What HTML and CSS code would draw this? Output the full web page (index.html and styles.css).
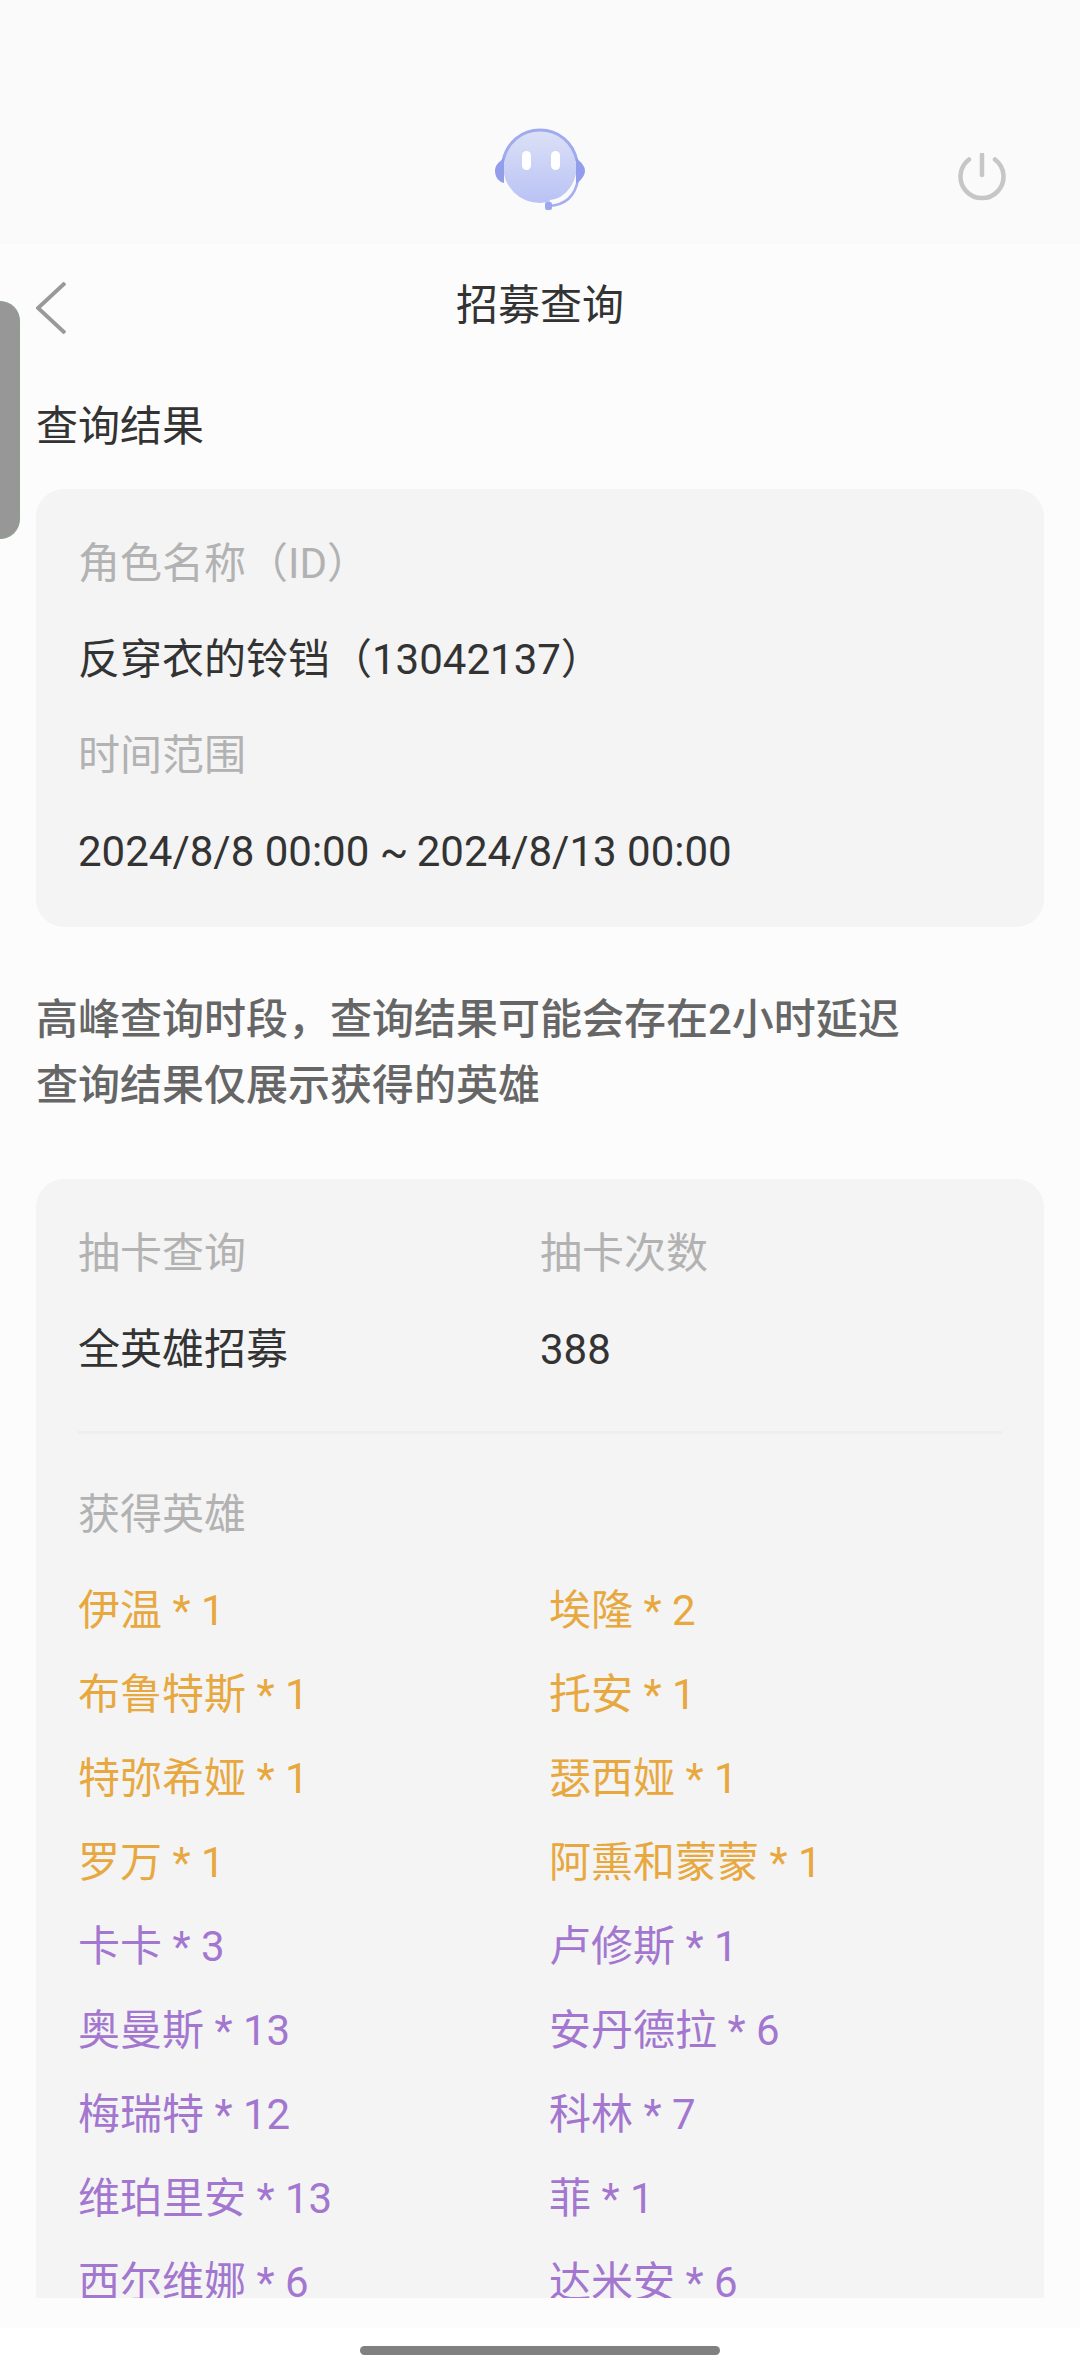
FILE: index.html
```html
<!DOCTYPE html>
<html lang="zh-CN">
<head>
  <meta charset="UTF-8" />
  <meta name="viewport" content="width=device-width, initial-scale=1.0" />
  <title>招募查询</title>
  <link rel="stylesheet" href="styles.css">
</head>
<body>
  <header class="top-bar">
    <svg class="robot" viewBox="0 0 90 82">
      <defs>
        <linearGradient id="face" x1="0" y1="0" x2="0" y2="1">
          <stop offset="0" stop-color="#dde1f6" />
          <stop offset="1" stop-color="#b9c2f5" />
        </linearGradient>
      </defs>
      <circle cx="45" cy="38" r="37" fill="url(#face)" />
      <path d="M8 33C12 14 27 2 45 2s33 12 37 31" fill="none" stroke="#a0abee" stroke-width="3" />
      <path d="M82 51C77 65 68 73 55 74" fill="none" stroke="#fafafa" stroke-width="4" />
      <path d="M83 52C80 68 70 77 54 78" fill="none" stroke="#a5aff0" stroke-width="2.6" />
      <path d="M9 30v25C4 54 0 49 0 43s4-9 9-13z" fill="#929eeb" />
      <path d="M81 30v26c4-3 9-8 9-13s-4-9-9-13z" fill="#929eeb" />
      <rect x="27" y="23" width="9" height="19" rx="4.5" fill="#fff" />
      <rect x="56" y="23" width="9" height="19" rx="4.5" fill="#fff" />
      <rect x="50" y="74" width="7" height="8" rx="2" fill="#9da8ee" />
    </svg>
    <svg class="power" viewBox="0 0 48 48">
      <path d="M11 6.500A21.500 21.500 0 1 0 37 6.500M24 1.500V22" />
    </svg>
  </header>

  <main>
    <div class="title-bar">
      <svg class="back" viewBox="0 0 30 52">
        <path d="M29 1L2 26l27 25" />
      </svg>
      <h1>招募查询</h1>
    </div>

    <h2>查询结果</h2>

    <section class="card role-card">
      <p class="label">角色名称（ID）</p>
      <p>反穿衣的铃铛（13042137）</p>
      <p class="label">时间范围</p>
      <p>2024/8/8 00:00 <span class="tilde">~</span> 2024/8/13 00:00</p>
    </section>

    <p class="notice">高峰查询时段，查询结果可能会存在2小时延迟<br>查询结果仅展示获得的英雄</p>

    <section class="card result-card">
      <div class="summary">
        <div>
          <p class="label">抽卡查询</p>
          <p>全英雄招募</p>
        </div>
        <div>
          <p class="label">抽卡次数</p>
          <p>388</p>
        </div>
      </div>
      <p class="label heroes-label">获得英雄</p>
      <ul class="heroes">
        <li class="gold">伊温 * 1</li>
        <li class="gold">埃隆 * 2</li>
        <li class="gold">布鲁特斯 * 1</li>
        <li class="gold">托安 * 1</li>
        <li class="gold">特弥希娅 * 1</li>
        <li class="gold">瑟西娅 * 1</li>
        <li class="gold">罗万 * 1</li>
        <li class="gold">阿熏和蒙蒙 * 1</li>
        <li class="purple">卡卡 * 3</li>
        <li class="purple">卢修斯 * 1</li>
        <li class="purple">奥曼斯 * 13</li>
        <li class="purple">安丹德拉 * 6</li>
        <li class="purple">梅瑞特 * 12</li>
        <li class="purple">科林 * 7</li>
        <li class="purple">维珀里安 * 13</li>
        <li class="purple">菲 * 1</li>
        <li class="purple">西尔维娜 * 6</li>
        <li class="purple">达米安 * 6</li>
      </ul>
    </section>
  </main>

  <footer>
    <div class="home-bar"></div>
  </footer>

  <div class="side-handle"></div>
</body>
</html>
```
FILE: styles.css
```css
* {
  box-sizing: border-box;
}

body {
  font-family: Roboto, "Noto Sans CJK SC", sans-serif;
  font-size: 42px;
  margin: 0;
  height: 2376px;
  display: flex;
  flex-direction: column;
  overflow: hidden;
  background: #fcfcfc;
  color: #333;
}

h1, h2, p, ul {
  margin: 0;
  padding: 0;
  font-size: 42px;
  font-weight: 400;
}

svg {
  display: block;
}

.top-bar {
  flex: none;
  height: 244px;
  padding: 128px 74px 0 495px;
  display: flex;
  justify-content: space-between;
  background: #fafafa;
}

.robot {
  width: 90px;
  height: 82px;
}

.power {
  width: 48px;
  height: 48px;
  margin-top: 25px;
  fill: none;
  stroke: #c6c6c6;
  stroke-width: 4.5;
  stroke-linecap: round;
}

main {
  flex: none;
  height: 2054px;
  padding: 0 36px;
  overflow: hidden;
}

.title-bar {
  height: 120px;
  display: grid;
  grid-template-columns: 30px 1fr 30px;
  align-items: center;
  text-align: center;
}

.title-bar h1 {
  padding-bottom: 6px;
}

.back {
  width: 30px;
  height: 52px;
  margin-top: 7px;
  fill: none;
  stroke: #999;
  stroke-width: 4;
}

h2 {
  height: 125px;
  line-height: 125px;
}

.card {
  background: #f4f4f4;
  border-radius: 28px;
  padding: 27px 42px;
  line-height: 96px;
}

.label {
  color: #b2b2b2;
}

.tilde {
  letter-spacing: -2px;
}

.notice {
  padding: 60px 0;
  line-height: 66px;
  font-weight: 500;
  color: #666;
}

.result-card {
  height: 1300px;
}

.summary {
  display: grid;
  grid-template-columns: 1fr 1fr;
  height: 228px;
  border-bottom: 3px solid #eee;
}

.heroes-label {
  margin-top: 33px;
}

.heroes {
  display: grid;
  grid-template-columns: 471px 1fr;
  margin-top: 6px;
  line-height: 84px;
  list-style: none;
}

.gold {
  color: #e8a840;
}

.purple {
  color: #a377cf;
}

footer {
  flex: none;
  height: 48px;
  margin-top: 30px;
  padding-top: 18px;
  background: #fff;
}

.home-bar {
  width: 360px;
  height: 9px;
  margin: 0 auto;
  border-radius: 5px;
  background: #808080;
}

.side-handle {
  position: absolute;
  left: 0;
  top: 301px;
  width: 20px;
  height: 238px;
  border: 1px solid #8b9f8d;
  border-left: none;
  border-radius: 0 22px 22px 0;
  background: #979797;
}
```
